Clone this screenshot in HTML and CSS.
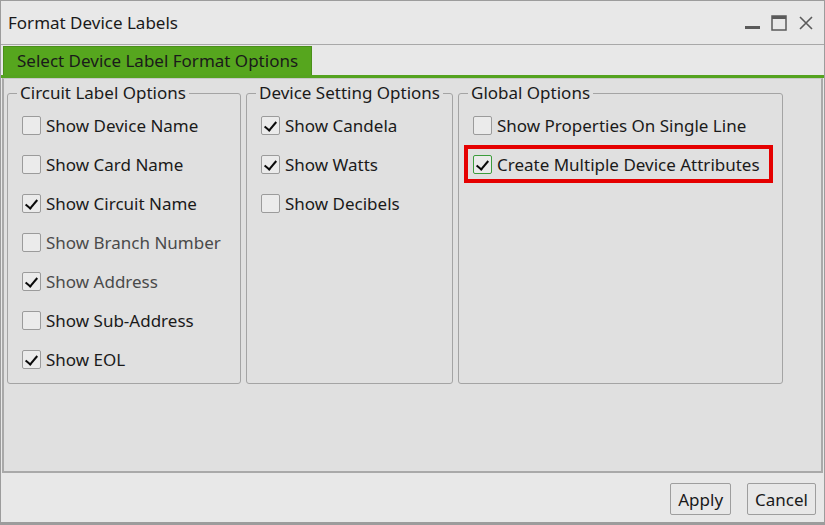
FILE: index.html
```html
<!DOCTYPE html>
<html lang="en">
<head>
    <meta charset="UTF-8">
    <title>Format Device Labels</title>
    <link rel="stylesheet" href="styles.css">
</head>
<body>
    <div class="window">
        <div class="titlebar">
            <span class="title">Format Device Labels</span>
            <div class="win-buttons">
                <svg width="16" height="16" viewBox="0 0 16 16"><rect x="1" y="11" width="15" height="3" fill="#5a5a5a"/></svg>
                <svg width="16" height="16" viewBox="0 0 16 16"><rect x="1" y="1" width="14" height="14" fill="none" stroke="#5a5a5a" stroke-width="1.5"/><rect x="1" y="1" width="14" height="3" fill="#5a5a5a"/></svg>
                <svg width="16" height="16" viewBox="0 0 16 16"><path d="M2 2 L14 14 M14 2 L2 14" stroke="#5a5a5a" stroke-width="1.6"/></svg>
            </div>
        </div>
        <div class="tabstrip">
            <div class="tab">Select Device Label Format Options</div>
        </div>
        <div class="content">
            <fieldset class="group g1">
                <legend>Circuit Label Options</legend>
                <label class="opt"><span class="box"></span>Show Device Name</label>
                <label class="opt"><span class="box"></span>Show Card Name</label>
                <label class="opt"><span class="box checked"></span>Show Circuit Name</label>
                <label class="opt dim"><span class="box"></span>Show Branch Number</label>
                <label class="opt dim"><span class="box checked"></span>Show Address</label>
                <label class="opt"><span class="box"></span>Show Sub-Address</label>
                <label class="opt"><span class="box checked"></span>Show EOL</label>
            </fieldset>
            <fieldset class="group g2">
                <legend>Device Setting Options</legend>
                <label class="opt"><span class="box checked"></span>Show Candela</label>
                <label class="opt"><span class="box checked"></span>Show Watts</label>
                <label class="opt"><span class="box"></span>Show Decibels</label>
            </fieldset>
            <fieldset class="group g3">
                <legend>Global Options</legend>
                <label class="opt"><span class="box"></span>Show Properties On Single Line</label>
                <label class="opt marked"><span class="box checked focus"></span>Create Multiple Device Attributes</label>
            </fieldset>
        </div>
        <div class="footer">
            <button class="btn">Apply</button>
            <button class="btn">Cancel</button>
        </div>
    </div>
</body>
</html>
```

FILE: styles.css
```css
* {
    box-sizing: border-box;
}

body {
    margin: 0;
    font-family: "Noto Sans", "Open Sans", sans-serif;
    color: #1a1a1a;
}

.window {
    width: 825px;
    height: 525px;
    background: #e8e8e8;
    border: 1px solid #9c9c9c;
    border-bottom-width: 3px;
    display: flex;
    flex-direction: column;
}

.titlebar {
    height: 44px;
    flex: none;
    display: flex;
    align-items: center;
    justify-content: space-between;
    padding: 0 10px 0 7px;
    border-bottom: 1px solid #a8a8a8;
}

.title {
    font-size: 17px;
}

.win-buttons {
    display: flex;
    gap: 11px;
}

.tabstrip {
    height: 33px;
    flex: none;
    padding: 1px 0 0 2px;
    border-bottom: 3px solid #54a31f;
    display: flex;
}

.tab {
    background: #56a61e;
    border: 1px solid #4a8f1a;
    border-bottom: none;
    width: 309px;
    font-size: 17px;
    line-height: 28px;
    padding-left: 13px;
    color: #1a1a1a;
}

.content {
    flex: 1;
    margin: 0 1px;
    background: #e0e0e0;
    border: 2px solid #a9a9a9;
    border-top: 1px solid #c8c8c8;
    display: flex;
    align-items: flex-start;
    gap: 5px;
    padding: 4px 0 0 3px;
}

.group {
    margin: 0;
    height: 301px;
    border: 1px solid #a4a4a4;
    border-radius: 3px;
    padding: 3px 0 0 14px;
    display: flex;
    flex-direction: column;
}

.group legend {
    font-size: 17px;
    line-height: 20px;
    padding: 0 3px;
    margin-left: -5px;
}

.g1 {
    width: 234px;
}

.g2 {
    width: 207px;
}

.g3 {
    width: 325px;
    padding-left: 5px;
}

.g3 legend {
    margin-left: 4px;
}

.g3 .opt {
    padding-left: 9px;
}

.opt {
    display: flex;
    align-items: center;
    height: 39px;
    font-size: 17px;
    gap: 5px;
}

.opt.dim {
    color: #4a4a4a;
}

.opt.marked {
    border: 4px solid #e50000;
    width: 309px;
    height: 38px;
    padding-left: 5px;
}

.box {
    width: 19px;
    height: 19px;
    border: 1px solid #9b9b9b;
    border-radius: 2px;
    background: #ebebeb;
    flex: none;
    position: relative;
}

.box.checked::after {
    content: "";
    position: absolute;
    left: 5px;
    top: 2px;
    width: 5px;
    height: 10px;
    border-right: 2.5px solid #0a0a0a;
    border-bottom: 2.5px solid #0a0a0a;
    transform: rotate(40deg);
}

.box.focus {
    border-color: #3c9c3c;
}

.footer {
    height: 49px;
    flex: none;
    display: flex;
    justify-content: flex-end;
    align-items: center;
    gap: 16px;
    padding-right: 8px;
    padding-top: 3px;
}

.btn {
    font-family: inherit;
    font-size: 17px;
    color: #1a1a1a;
    background: #e8e8e8;
    border: 1px solid #9e9e9e;
    border-radius: 2px;
    height: 32px;
    padding: 0 7px;
}
```
